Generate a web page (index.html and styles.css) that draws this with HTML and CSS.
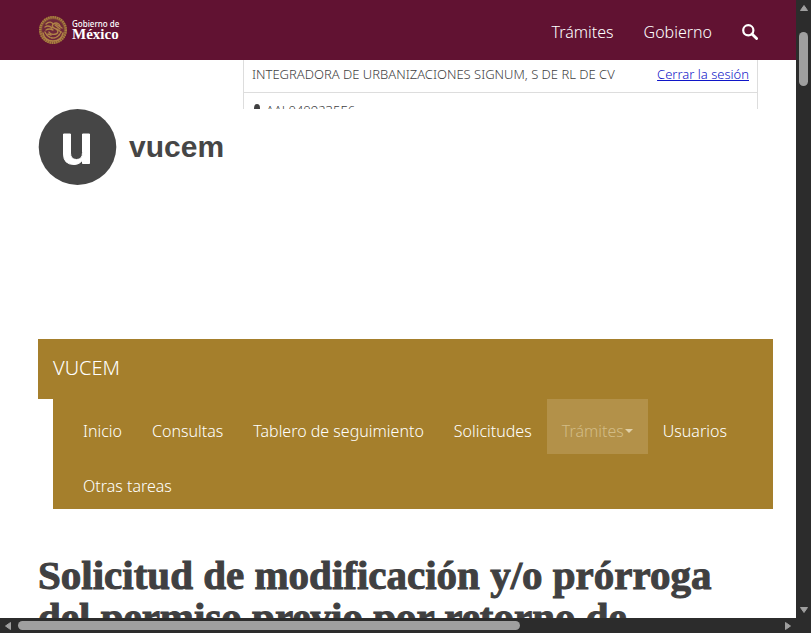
FILE: index.html
```html
<!DOCTYPE html>
<html lang="es">
<head>
<meta charset="utf-8">
<meta name="viewport" content="width=device-width, initial-scale=1">
<title>VUCEM</title>
<link rel="stylesheet" href="styles.css">
</head>
<body>
<div class="window">
  <div class="page">
    <header class="gov-bar">
      <a class="gov-brand" href="#" aria-label="Gobierno de México">
        <svg class="seal" viewBox="0 0 30 30" aria-hidden="true">
          <circle cx="15" cy="15" r="14" fill="#824a38"/>
          <circle cx="15" cy="15" r="12.800" fill="none" stroke="#a9803f" stroke-width="2.4" stroke-dasharray="1.4 .8"/>
          <circle cx="15" cy="15" r="10.800" fill="#70283a"/>
          <g fill="none" stroke="#b08347" stroke-linecap="round" stroke-width="1.4">
            <path d="M5 18c1 5 5 8 10 8s9-3 10-8"/>
            <path d="M7 17c2 4 5 6 8 6s6-2 8-6" stroke-dasharray="1.6 1.2"/>
            <path d="M8 9c3-3 6-2 7 0 3-2 6-1 7 2"/>
            <path d="M7 12c3-2 5-1 7 1M8 15c3-2 5-1 7 0M15 9c-2 3 1 4 3 5s3 4 0 5-6 0-7-2"/>
            <path d="M17 10l5 4M18 9l6 4M19 14l4 3M10 19l3 1"/>
          </g>
        </svg>
        <span class="gov-name"><small>Gobierno de</small><strong>México</strong></span>
      </a>
      <nav class="gov-links" aria-label="Gobierno">
        <a href="#">Trámites</a>
        <a href="#">Gobierno</a>
        <a href="#" aria-label="Buscar">
          <svg class="search" viewBox="0 0 16 16" aria-hidden="true"><circle cx="6.3" cy="6.3" r="5.1" fill="none" stroke="#fff" stroke-width="2.2"/><path d="M10 10l4.6 4.6" stroke="#fff" stroke-width="2.8" stroke-linecap="round"/></svg>
        </a>
      </nav>
    </header>

    <main class="content">
      <section class="session">
        <div class="session-row">
          <span>INTEGRADORA DE URBANIZACIONES SIGNUM, S DE RL DE CV</span>
          <a href="#">Cerrar la sesión</a>
        </div>
        <div class="session-row">
          <span class="rfc"><svg class="user" viewBox="0 0 10 14" aria-hidden="true"><ellipse cx="5" cy="4" rx="3" ry="4" fill="#404041"/><path d="M0 14c0-4 2-5 5-5s5 1 5 5z" fill="#404041"/></svg>AAL0409235E6</span>
        </div>
      </section>

      <a class="logo" href="#">
        <svg class="logo-mark" viewBox="0 0 78 76" aria-hidden="true"><ellipse cx="39" cy="38" rx="38.8" ry="38" fill="#464646"/><path d="M25 25h7v19q0 6.500 6 6.500 6 0 6-7V25h7v29.500h-7V51q-3 4.500-8.500 4.500Q25 55.500 25 45z" fill="#fff" stroke="#fff" stroke-linejoin="round"/></svg>
        <span>vucem</span>
      </a>

      <nav class="menu" aria-label="VUCEM">
        <a class="menu-brand" href="#">VUCEM</a>
        <ul class="menu-list">
          <li><a href="#">Inicio</a></li>
          <li><a href="#">Consultas</a></li>
          <li><a href="#">Tablero de seguimiento</a></li>
          <li><a href="#">Solicitudes</a></li>
          <li><a class="active" href="#">Trámites<span class="caret"></span></a></li>
          <li><a href="#">Usuarios</a></li>
          <li><a href="#">Otras tareas</a></li>
        </ul>
      </nav>

      <h1>Solicitud de modificación y/o prórroga del permiso previo por retorno de</h1>
    </main>
  </div>

  <div class="track track-y" aria-hidden="true">
    <svg viewBox="0 0 10 8"><path d="M5 1.500L8.500 6.500h-7z"/></svg>
    <div class="rail"><div class="thumb"></div></div>
    <svg viewBox="0 0 10 8"><path d="M5 6.500L8.500 1.500h-7z"/></svg>
  </div>
  <div class="track track-x" aria-hidden="true">
    <svg viewBox="0 0 8 10"><path d="M1.500 5L6.500 1.500v7z"/></svg>
    <div class="rail"><div class="thumb"></div></div>
    <svg viewBox="0 0 8 10"><path d="M6.500 5L1.500 1.500v7z"/></svg>
  </div>
</div>
</body>
</html>
```
FILE: styles.css
```css
* { box-sizing: border-box; }

body {
  margin: 0;
  color: #404041;
  font-family: "Noto Sans", "Open Sans", sans-serif;
  font-size: 16px;
  font-weight: 300;
}

a { color: inherit; text-decoration: none; }

.window {
  display: grid;
  grid-template: minmax(0, 1fr) 15px / minmax(0, 1fr) 15px;
  height: 100vh;
  background: #2c2c2c;
}

.page { overflow: hidden; background: #fff; }

.gov-bar {
  display: flex;
  align-items: center;
  justify-content: space-between;
  height: 60px;
  padding: 0 38px;
  background: #611232;
  color: #fff;
}

.gov-brand { display: flex; align-items: center; gap: 4px; }
.seal { width: 30px; height: 30px; }
.gov-name { display: flex; flex-direction: column; font-family: "Liberation Serif", serif; }
.gov-name small { font-family: "Noto Sans", sans-serif; font-size: 8px; font-weight: 500; line-height: 8px; }
.gov-name strong { font-size: 15px; font-weight: 700; line-height: 12px; }

.gov-links { display: flex; align-items: center; gap: 30px; padding-top: 4px; }
.search { display: block; width: 16px; height: 16px; }

.content { padding: 0 23px 0 38px; }

.session {
  height: 49px;
  margin: 0 15px 0 205px;
  overflow: hidden;
  border: solid #ddd;
  border-width: 0 1px;
  font-size: 13px;
}
.session-row {
  display: flex;
  justify-content: space-between;
  padding: 5px 8px 8px;
  border-bottom: 1px solid #ddd;
  line-height: 19px;
}
.session-row + .session-row { padding-top: 8px; }
.session-row a { color: #1016c8; text-decoration: underline; }
.rfc { display: flex; align-items: center; gap: 4px; }
.user { width: 10px; height: 14px; }

.logo {
  display: flex;
  align-items: center;
  gap: 12px;
  height: 76px;
  margin-bottom: 154px;
  color: #464646;
  font-family: "Liberation Sans", sans-serif;
  font-size: 30px;
  font-weight: 700;
}
.logo-mark { width: 79px; height: 76px; }

.menu { color: #fff; }
.menu-brand {
  display: block;
  height: 60px;
  padding: 0 15px;
  background: #a57f2c;
  font-size: 20px;
  line-height: 58px;
}
.menu-list {
  display: flex;
  flex-wrap: wrap;
  margin: 0 0 0 15px;
  padding: 0 15px;
  background: #a57f2c;
  list-style: none;
}
.menu-list a { display: flex; align-items: center; height: 55px; padding: 8px 15px 0; }
.menu-list .active { gap: 1px; background: #b39149; color: #d2bc86; }
.caret { border: solid transparent; border-width: 4px 4px 0; border-top-color: #e0d0a8; }

h1 {
  margin: 45px 0 0;
  font-family: "Liberation Serif", serif;
  font-size: 41px;
  font-weight: 700;
  line-height: 42px;
  -webkit-text-stroke: 1px #404041;
}

.track { display: flex; align-items: center; justify-content: space-between; }
.track svg { flex: none; fill: #9f9f9f; stroke: #9f9f9f; stroke-linejoin: round; }
.rail { flex: 1; }
.thumb { border-radius: 5px; background: #9f9f9f; }
.track-y { flex-direction: column; padding: 4px 0; }
.track-y svg { width: 10px; height: 8px; }
.track-y .rail { padding-top: 20px; }
.track-y .thumb { width: 9px; height: 54px; }
.track-x { padding: 0 4px; }
.track-x svg { width: 8px; height: 10px; }
.track-x .rail { padding: 0 6px; }
.track-x .thumb { width: 66%; height: 9px; }
```
